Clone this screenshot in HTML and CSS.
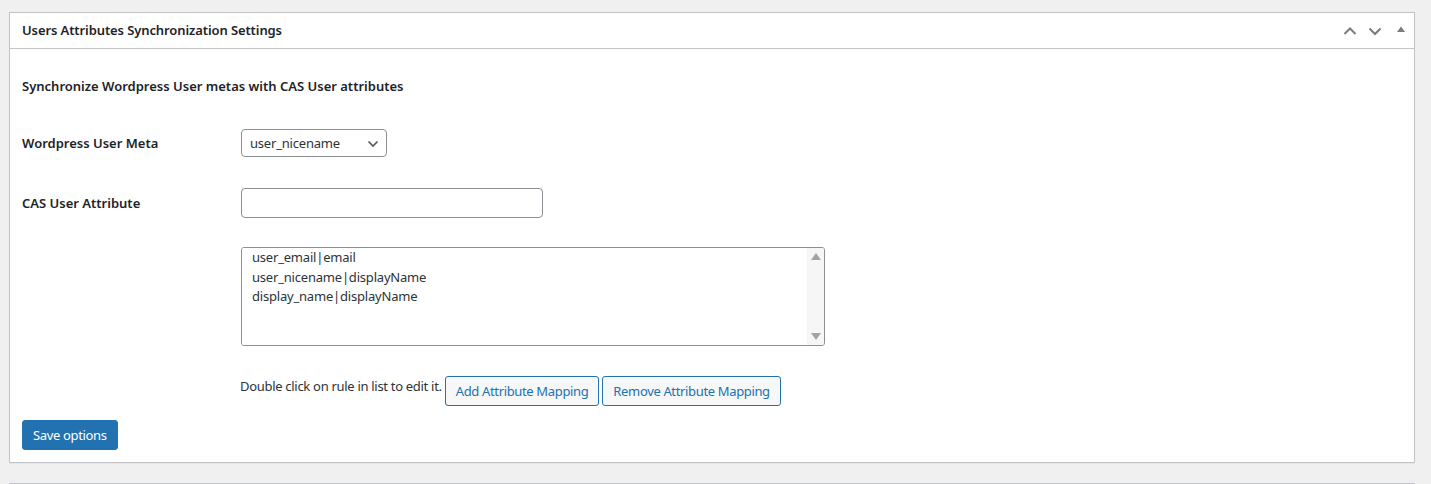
FILE: index.html
```html
<!DOCTYPE html>
<html lang="en">
<head>
    <meta charset="UTF-8">
    <title>Users Attributes Synchronization Settings</title>
    <link rel="stylesheet" href="styles.css">
</head>
<body>

    <div class="postbox">
        <div class="postbox-header">
            <h2 class="hndle">Users Attributes Synchronization Settings</h2>
            <div class="handle-actions">
                <!-- move up -->
                <svg class="handle-icon" width="14" height="10" viewBox="0 0 14 10">
                    <path d="M1.5 8 L7 2.5 L12.5 8" fill="none" stroke="#787c82" stroke-width="2"/>
                </svg>
                <!-- move down -->
                <svg class="handle-icon" width="14" height="10" viewBox="0 0 14 10">
                    <path d="M1.5 2.5 L7 8 L12.5 2.5" fill="none" stroke="#787c82" stroke-width="2"/>
                </svg>
                <!-- toggle panel -->
                <svg class="toggle-icon" width="10" height="8" viewBox="0 0 10 8">
                    <path d="M1 7 L5 1.5 L9 7 Z" fill="#787c82"/>
                </svg>
            </div>
        </div>

        <div class="inside">
            <h3 class="section-title">Synchronize Wordpress User metas with CAS User attributes</h3>

            <div class="form-row">
                <label class="row-label" for="wp_meta">Wordpress User Meta</label>
                <div class="select-wrap">
                    <select id="wp_meta" class="meta-select">
                        <option>user_nicename</option>
                        <option>user_email</option>
                        <option>display_name</option>
                    </select>
                    <svg class="select-arrow" width="12" height="8" viewBox="0 0 12 8">
                        <path d="M1.5 1.5 L6 6 L10.5 1.5" fill="none" stroke="#50575e" stroke-width="1.6"/>
                    </svg>
                </div>
            </div>

            <div class="form-row row-cas">
                <label class="row-label" for="cas_attr">CAS User Attribute</label>
                <input type="text" id="cas_attr" class="attr-input">
            </div>

            <div class="form-row row-list">
                <span class="row-label"></span>
                <div class="mapping-box">
                    <textarea class="mapping-list" readonly>user_email|email
user_nicename|displayName
display_name|displayName</textarea>
                    <div class="fake-scroll">
                        <span class="arrow-up"></span>
                        <span class="arrow-down"></span>
                    </div>
                </div>
            </div>

            <div class="form-row row-actions">
                <span class="row-label"></span>
                <span class="hint">Double click on rule in list to edit it.</span>
                <button class="button">Add Attribute Mapping</button>
                <button class="button">Remove Attribute Mapping</button>
            </div>

            <button class="button-primary">Save options</button>
        </div>
    </div>

    <div class="postbox next-box"></div>

</body>
</html>
```

FILE: styles.css
```css
body {
    margin: 0;
    padding: 12px 16px 0 9px;
    background: #f0f0f1;
    color: #1d2327;
    font-family: "Noto Sans", "Open Sans", sans-serif;
    font-size: 13px;
    overflow: hidden;
    height: 472px;
}

.postbox {
    background: #fff;
    border: 1px solid #c3c4c7;
    box-shadow: 0 1px 1px rgba(0, 0, 0, 0.04);
}

.next-box {
    margin-top: 20px;
    height: 40px;
}

/* Header bar with title and handle buttons */
.postbox-header {
    display: flex;
    align-items: center;
    justify-content: space-between;
    height: 35px;
    border-bottom: 1px solid #c3c4c7;
    padding: 0 8px 0 12px;
}

.hndle {
    margin: 0;
    font-size: 13px;
    font-weight: 600;
    line-height: 1.4;
    letter-spacing: -0.1px;
}

.handle-actions {
    display: flex;
    align-items: center;
    gap: 11px;
}

.toggle-icon {
    margin-left: 3px;
    margin-top: -3px;
}

.inside {
    padding: 27px 12px 12px;
}

.section-title {
    margin: 0 0 33px;
    font-size: 13px;
    font-weight: 600;
    line-height: 20px;
}

.form-row {
    display: flex;
    align-items: center;
}

.row-label {
    width: 219px;
    flex-shrink: 0;
    font-size: 13px;
    font-weight: 600;
}

.row-cas {
    margin-top: 31px;
}

.row-list {
    margin-top: 29px;
}

.row-actions {
    margin-top: 30px;
    align-items: flex-start;
}

/* Select box */
.select-wrap {
    position: relative;
    width: 146px;
}

.meta-select {
    appearance: none;
    width: 146px;
    height: 28px;
    padding: 0 24px 0 8px;
    border: 1px solid #8c8f94;
    border-radius: 4px;
    background: #fff;
    color: #2c3338;
    font-family: inherit;
    font-size: 13px;
    letter-spacing: -0.2px;
}

.select-arrow {
    position: absolute;
    right: 8px;
    top: 11px;
    pointer-events: none;
}

.attr-input {
    width: 302px;
    height: 30px;
    box-sizing: border-box;
    border: 1px solid #8c8f94;
    border-radius: 4px;
    padding: 0 8px;
    font-family: inherit;
    font-size: 13px;
}

/* Mapping list with a classic scrollbar */
.mapping-box {
    display: flex;
    width: 584px;
    height: 99px;
    box-sizing: border-box;
    border: 1px solid #8c8f94;
    border-radius: 3px;
    overflow: hidden;
}

.mapping-list {
    flex: 1;
    border: none;
    resize: none;
    outline: none;
    padding: 0 10px;
    margin: 0;
    font-family: inherit;
    font-size: 13px;
    line-height: 19.5px;
    letter-spacing: -0.2px;
    color: #2c3338;
    overflow: hidden;
}

.fake-scroll {
    width: 17px;
    background: #f6f6f6;
    display: flex;
    flex-direction: column;
    justify-content: space-between;
    align-items: center;
    padding: 5px 0;
}

.arrow-up,
.arrow-down {
    width: 0;
    height: 0;
    border-left: 5px solid transparent;
    border-right: 5px solid transparent;
}

.arrow-up {
    border-bottom: 7px solid #a3a3a3;
}

.arrow-down {
    border-top: 7px solid #a3a3a3;
}

.hint {
    margin-left: -1px;
    margin-right: 3px;
    margin-top: 1px;
    color: #2c3338;
    font-size: 13px;
    line-height: 18px;
    letter-spacing: -0.3px;
}

.button {
    height: 30px;
    padding: 0 10px;
    margin-right: 3px;
    border: 1px solid #2271b1;
    border-radius: 3px;
    background: #f6f7f7;
    color: #2271b1;
    font-family: inherit;
    font-size: 13px;
    letter-spacing: -0.35px;
}

.button-primary {
    margin-top: 14px;
    height: 30px;
    padding: 0 10px;
    border: 1px solid #2271b1;
    border-radius: 3px;
    background: #2271b1;
    color: #fff;
    font-family: inherit;
    font-size: 13px;
    letter-spacing: -0.35px;
}
```
